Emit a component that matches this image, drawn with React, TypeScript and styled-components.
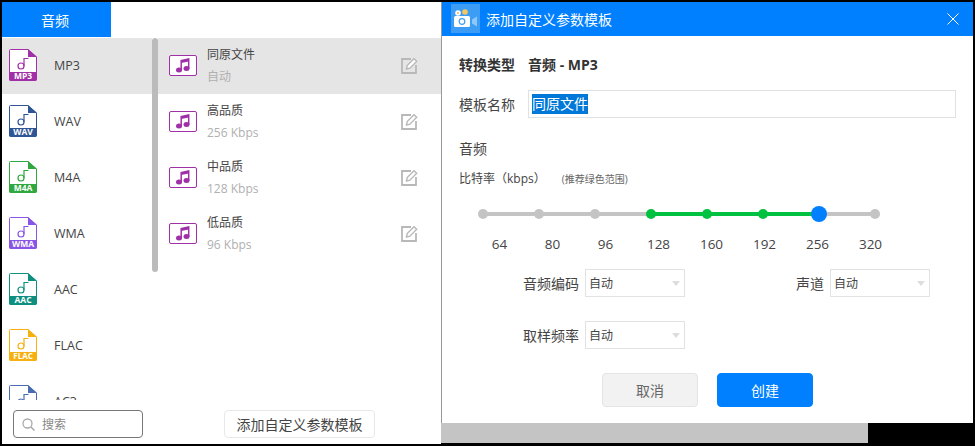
import React from "react";
import styled, { createGlobalStyle } from "styled-components";

const Global = createGlobalStyle`
  html, body {
    margin: 0;
    padding: 0;
    background: #000;
  }
  * {
    box-sizing: border-box;
  }
`;

const FONT = `"Open Sans", "Noto Sans CJK SC", sans-serif`;

const Frame = styled.div`
  width: 975px;
  height: 446px;
  padding: 2px 0 0 2px;
  display: flex;
  background: #000;
  font-family: ${FONT};
  overflow: hidden;
`;

const LeftPanel = styled.div`
  width: 439px;
  height: 442px;
  background: #fff;
  display: flex;
  flex-direction: column;
  flex-shrink: 0;
`;

const TabBar = styled.div`
  height: 36px;
  display: flex;
  flex-shrink: 0;
`;

const Tab = styled.div`
  width: 109px;
  height: 35px;
  padding-right: 3px;
  background: #0080ff;
  color: #fff;
  font-size: 14px;
  display: flex;
  align-items: center;
  justify-content: center;
`;

const Columns = styled.div`
  flex: 1;
  display: flex;
  min-height: 0;
`;

const FormatColumn = styled.div`
  width: 156px;
  display: flex;
  flex-direction: column;
  position: relative;
  flex-shrink: 0;
`;

const FormatList = styled.div`
  height: 362px;
  overflow: hidden;
`;

const FormatRow = styled.div<{ $active?: boolean }>`
  width: 150px;
  height: 56px;
  display: flex;
  align-items: center;
  padding: 0 0 2px 6px;
  gap: 16px;
  background: ${(p) => (p.$active ? "#e5e5e5" : "#fff")};
  font-size: 12.5px;
  color: #444;
`;

const Scrollbar = styled.div`
  position: absolute;
  left: 150px;
  top: 0;
  width: 6px;
  height: 234px;
  border-radius: 3px;
  background: #bbb;
`;

const SearchArea = styled.div`
  padding: 10px 0 0 11px;
`;

const SearchBox = styled.div`
  width: 130px;
  height: 28px;
  border: 1px solid #777;
  border-radius: 4px;
  display: flex;
  align-items: center;
  padding-left: 8px;
  gap: 7px;
  font-size: 12px;
  color: #888;
`;

const PresetColumn = styled.div`
  flex: 1;
  display: flex;
  flex-direction: column;
`;

const PresetList = styled.div`
  flex: 1;
`;

const PresetRow = styled.div<{ $active?: boolean }>`
  height: 56px;
  display: flex;
  align-items: center;
  padding: 0 23px 2px 11px;
  background: ${(p) => (p.$active ? "#e5e5e5" : "#fff")};
`;

const PresetText = styled.div`
  flex: 1;
  margin: 2px 0 0 10px;
  display: flex;
  flex-direction: column;
  gap: 4px;
`;

const PresetName = styled.div`
  font-size: 12px;
  line-height: 18px;
  color: #444;
`;

const PresetSub = styled.div`
  font-size: 12px;
  line-height: 18px;
  color: #b0b0b0;
`;

const PresetFooter = styled.div`
  display: flex;
  justify-content: center;
  padding: 0 0 6px 0;
`;

const AddButton = styled.div`
  width: 151px;
  height: 28px;
  border: 1px solid #e8e8e8;
  border-radius: 4px;
  font-size: 14px;
  color: #444;
  display: flex;
  align-items: center;
  justify-content: center;
`;

const RightSide = styled.div`
  flex: 1;
  display: flex;
  flex-direction: column;
`;

const Modal = styled.div`
  width: 532px;
  height: 421px;
  background: #fff;
  border-left: 1px solid #999;
  display: flex;
  flex-direction: column;
`;

const ModalHeader = styled.div`
  height: 34px;
  background: #0080ff;
  display: flex;
  align-items: center;
  padding: 0 14px 0 9px;
  color: #fff;
  font-size: 14px;
  flex-shrink: 0;
`;

const ModalTitle = styled.div`
  flex: 1;
  margin-left: 6px;
`;

const ModalBody = styled.div`
  flex: 1;
  padding: 19px 0 0 17px;
  display: flex;
  flex-direction: column;
`;

const TypeRow = styled.div`
  height: 20px;
  display: flex;
  align-items: center;
  gap: 13px;
  font-size: 14px;
  line-height: 20px;
  font-weight: 700;
  color: #333;
`;

const NameRow = styled.div`
  margin-top: 15px;
  display: flex;
  align-items: center;
  gap: 13px;
  font-size: 14px;
  color: #444;
`;

const NameInput = styled.div`
  width: 428px;
  height: 28px;
  border: 1px solid #e2e2e2;
  padding-left: 3px;
  display: flex;
  align-items: center;
  font-size: 14px;
`;

const Selected = styled.span`
  background: #0078d7;
  color: #fff;
  line-height: 20px;
`;

const SectionTitle = styled.div`
  margin-top: 21px;
  font-size: 14px;
  line-height: 20px;
  color: #444;
`;

const BitrateRow = styled.div`
  margin-top: 10px;
  display: flex;
  align-items: baseline;
  font-size: 12px;
  line-height: 20px;
  color: #444;
`;

const BitrateHint = styled.span`
  margin-left: 16px;
  font-size: 10px;
  color: #666;
`;

const Slider = styled.div`
  position: relative;
  width: 402px;
  margin: 17px 0 0 19px;
  height: 16px;
  display: flex;
  align-items: center;
  justify-content: space-between;
`;

const Track = styled.div`
  position: absolute;
  left: 5px;
  right: 5px;
  top: 6px;
  height: 4px;
  background: #c4c4c4;
`;

const TrackFill = styled.div`
  position: absolute;
  top: 6px;
  height: 4px;
  background: #00c140;
`;

const Stop = styled.div`
  position: relative;
  width: 10px;
  height: 10px;
  display: flex;
  align-items: center;
  justify-content: center;
`;

const StopDot = styled.div<{ $tone: "off" | "on" | "current" }>`
  flex-shrink: 0;
  width: ${(p) => (p.$tone === "current" ? 16 : 10)}px;
  height: ${(p) => (p.$tone === "current" ? 16 : 10)}px;
  border-radius: 50%;
  background: ${(p) =>
    p.$tone === "off" ? "#c4c4c4" : p.$tone === "on" ? "#00c140" : "#0080ff"};
`;

const Labels = styled.div`
  display: flex;
  margin: 12px 0 0 14px;
`;

const Label = styled.div`
  width: 53px;
  text-align: center;
  font-size: 13.5px;
  line-height: 20px;
  color: #444;
`;

const FieldGrid = styled.div`
  margin-top: 15px;
  display: grid;
  grid-template-columns: 120px 100px 133px 100px;
  grid-auto-rows: 28px;
  row-gap: 24px;
  column-gap: 6px;
  align-items: center;
`;

const FieldLabel = styled.div`
  text-align: right;
  font-size: 14px;
  color: #444;
`;

const Select = styled.div`
  height: 28px;
  border: 1px solid #e2e2e2;
  display: flex;
  align-items: center;
  justify-content: space-between;
  padding: 0 4px 0 3px;
  font-size: 12px;
  color: #444;
`;

const Caret = styled.div`
  width: 0;
  height: 0;
  border-left: 4.5px solid transparent;
  border-right: 4.5px solid transparent;
  border-top: 5px solid #ddd;
`;

const Actions = styled.div`
  margin: 24px 0 0 143px;
  display: flex;
  gap: 19px;
`;

const Button = styled.div<{ $primary?: boolean }>`
  width: 96px;
  height: 34px;
  border-radius: 4px;
  font-size: 14px;
  display: flex;
  align-items: center;
  justify-content: center;
  background: ${(p) => (p.$primary ? "#0080ff" : "#f2f2f2")};
  color: ${(p) => (p.$primary ? "#fff" : "#666")};
  border: 1px solid ${(p) => (p.$primary ? "#0080ff" : "#e4e4e4")};
`;

const Backdrop = styled.div`
  width: 427px;
  height: 20px;
  background: #c4c4c4;
`;

const formats = [
  { name: "MP3", color: "#a02fa8" },
  { name: "WAV", color: "#2f5596" },
  { name: "M4A", color: "#2ea83f" },
  { name: "WMA", color: "#8a55e6" },
  { name: "AAC", color: "#0e8f7f" },
  { name: "FLAC", color: "#f7b011" },
  { name: "AC3", color: "#4a6cb3" },
];

const presets = [
  { name: "同原文件", sub: "自动" },
  { name: "高品质", sub: "256 Kbps" },
  { name: "中品质", sub: "128 Kbps" },
  { name: "低品质", sub: "96 Kbps" },
];

const rates = ["64", "80", "96", "128", "160", "192", "256", "320"];

function FileIcon({ label, color }: { label: string; color: string }) {
  return (
    <svg width="30" height="34" viewBox="0 0 30 34" style={{ flexShrink: 0 }}>
      <path
        d="M2.5 1.5H20L28.5 9V31a1.5 1.5 0 0 1-1.5 1.5H3A1.5 1.5 0 0 1 1.5 31V2.5a1 1 0 0 1 1-1z"
        fill="#fff"
        stroke={color}
        strokeWidth="1"
      />
      <path d="M20 1L29 9H20z" fill={color} />
      <path d="M1 24H29V31a2 2 0 0 1-2 2H3a2 2 0 0 1-2-2z" fill={color} />
      <circle cx="13" cy="18" r="3" fill="none" stroke={color} strokeWidth="1.2" />
      <path d="M16 18V10.5H20.5" fill="none" stroke={color} strokeWidth="1.2" />
      <text
        x="15"
        y="31"
        textAnchor="middle"
        fontSize={label.length > 3 ? 8 : 8.5}
        fontWeight="700"
        fontFamily="'Open Sans', sans-serif"
        fill="#fff"
      >
        {label}
      </text>
    </svg>
  );
}

function NoteIcon() {
  return (
    <svg width="28" height="21" viewBox="0 0 28 21" style={{ flexShrink: 0 }}>
      <rect x="0.5" y="0.5" width="27" height="20" rx="1.5" fill="#fff" stroke="#a02fa8" />
      <ellipse cx="10" cy="15" rx="3" ry="2.5" fill="#a02fa8" />
      <ellipse cx="17.5" cy="13.5" rx="3" ry="2.5" fill="#a02fa8" />
      <path d="M12.2 15V5.5L19.7 4V13.5" fill="none" stroke="#a02fa8" strokeWidth="1.5" />
      <path d="M12.2 5.5L19.7 4V6.5L12.2 8z" fill="#a02fa8" />
    </svg>
  );
}

function EditIcon() {
  return (
    <svg width="17" height="17" viewBox="0 0 17 17" style={{ flexShrink: 0 }}>
      <path d="M10 2H1V16H15V8" fill="none" stroke="#b8b8b8" strokeWidth="1.8" />
      <path
        d="M5.5 12L6.2 8.5 13 1.7 15.7 4.3 8.9 11.2z"
        fill="#fff"
        stroke="#b8b8b8"
        strokeWidth="1.4"
      />
    </svg>
  );
}

function SearchIcon() {
  return (
    <svg width="13" height="13" viewBox="0 0 13 13" style={{ flexShrink: 0 }}>
      <circle cx="5.5" cy="5.5" r="4.5" fill="none" stroke="#aaa" strokeWidth="1.3" />
      <path d="M9 9L12.5 12.5" stroke="#aaa" strokeWidth="1.5" />
    </svg>
  );
}

function CameraIcon() {
  return (
    <svg width="29" height="29" viewBox="0 0 29 29" style={{ flexShrink: 0, marginTop: -2 }}>
      <rect width="29" height="29" fill="#3d9df5" />
      <circle cx="7" cy="9" r="2.8" fill="#fff" />
      <circle cx="7" cy="9" r="1" fill="#f2b84b" />
      <circle cx="14" cy="8" r="2.8" fill="#f7c65c" />
      <rect x="3" y="12" width="16" height="11" rx="1.5" fill="#fff" />
      <circle cx="11" cy="17.5" r="2.8" fill="none" stroke="#3d9df5" strokeWidth="1.2" />
      <path d="M21 15.5L26 12.5V22.5L21 19.5z" fill="#8cc8fb" />
    </svg>
  );
}

function CloseIcon() {
  return (
    <svg width="12" height="12" viewBox="0 0 12 12" style={{ flexShrink: 0 }}>
      <path d="M0.5 0.5L11.5 11.5M11.5 0.5L0.5 11.5" stroke="#fff" strokeWidth="1" />
    </svg>
  );
}

export default function App() {
  return (
    <Frame>
      <Global />
      <LeftPanel>
        <TabBar>
          <Tab>音频</Tab>
        </TabBar>
        <Columns>
          <FormatColumn>
            <FormatList>
              {formats.map((f, i) => (
                <FormatRow key={f.name} $active={i === 0}>
                  <FileIcon label={f.name} color={f.color} />
                  {f.name}
                </FormatRow>
              ))}
            </FormatList>
            <Scrollbar />
            <SearchArea>
              <SearchBox>
                <SearchIcon />
                搜索
              </SearchBox>
            </SearchArea>
          </FormatColumn>
          <PresetColumn>
            <PresetList>
              {presets.map((p, i) => (
                <PresetRow key={p.name} $active={i === 0}>
                  <NoteIcon />
                  <PresetText>
                    <PresetName>{p.name}</PresetName>
                    <PresetSub>{p.sub}</PresetSub>
                  </PresetText>
                  <EditIcon />
                </PresetRow>
              ))}
            </PresetList>
            <PresetFooter>
              <AddButton>添加自定义参数模板</AddButton>
            </PresetFooter>
          </PresetColumn>
        </Columns>
      </LeftPanel>
      <RightSide>
        <Modal>
          <ModalHeader>
            <CameraIcon />
            <ModalTitle>添加自定义参数模板</ModalTitle>
            <CloseIcon />
          </ModalHeader>
          <ModalBody>
            <TypeRow>
              <span>转换类型</span>
              <span>音频 - MP3</span>
            </TypeRow>
            <NameRow>
              模板名称
              <NameInput>
                <Selected>同原文件</Selected>
              </NameInput>
            </NameRow>
            <SectionTitle>音频</SectionTitle>
            <BitrateRow>
              比特率（kbps）
              <BitrateHint>(推荐绿色范围)</BitrateHint>
            </BitrateRow>
            <Slider>
              <Track />
              <TrackFill style={{ left: 173, width: 168 }} />
              {rates.map((r, i) => (
                <Stop key={r}>
                  <StopDot $tone={i === 6 ? "current" : i >= 3 && i < 6 ? "on" : "off"} />
                </Stop>
              ))}
            </Slider>
            <Labels>
              {rates.map((r) => (
                <Label key={r}>{r}</Label>
              ))}
            </Labels>
            <FieldGrid>
              <FieldLabel>音频编码</FieldLabel>
              <Select>
                自动
                <Caret />
              </Select>
              <FieldLabel>声道</FieldLabel>
              <Select>
                自动
                <Caret />
              </Select>
              <FieldLabel>取样频率</FieldLabel>
              <Select>
                自动
                <Caret />
              </Select>
            </FieldGrid>
            <Actions>
              <Button>取消</Button>
              <Button $primary>创建</Button>
            </Actions>
          </ModalBody>
        </Modal>
        <Backdrop />
      </RightSide>
    </Frame>
  );
}
